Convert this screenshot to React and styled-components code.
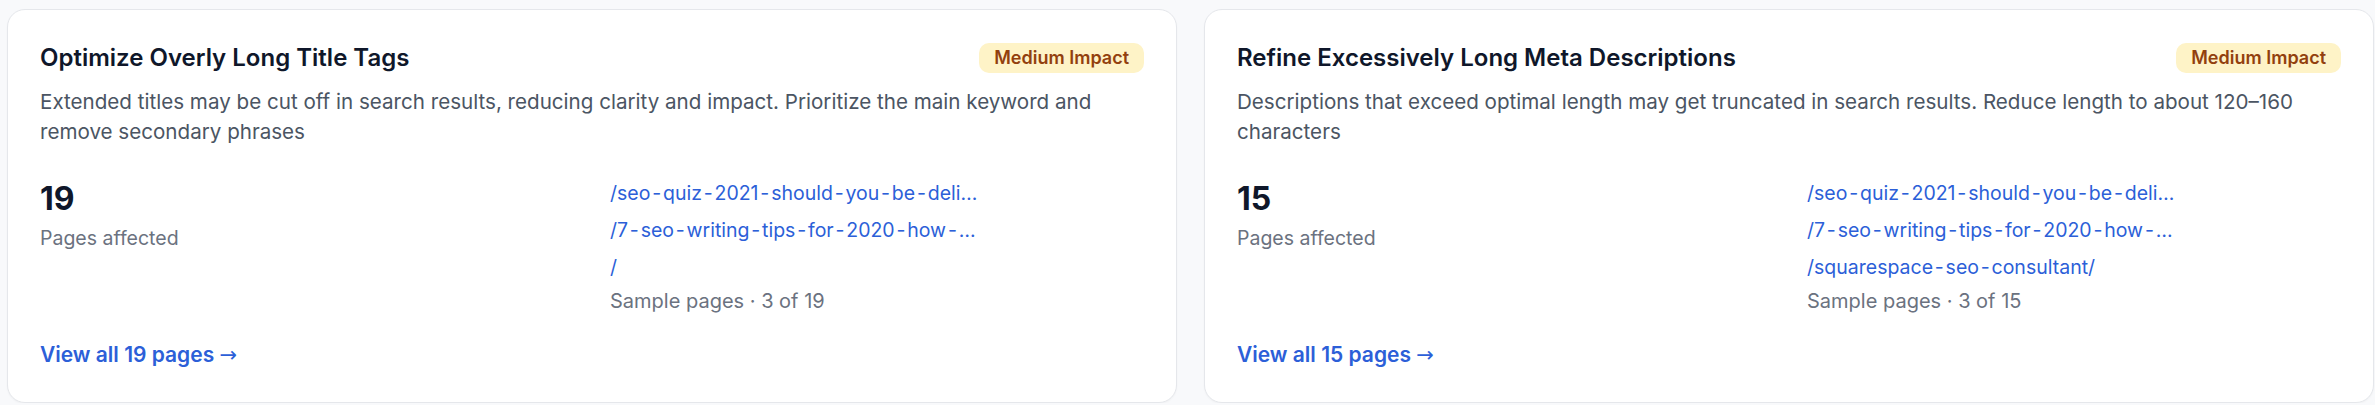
import React from 'react';
import styled, { createGlobalStyle } from 'styled-components';

const GlobalStyle = createGlobalStyle`
    * { box-sizing: border-box; }
    body {
        margin: 0;
        background: #f8f9fb;
        font-family: Inter, "Noto Sans", sans-serif;
        -webkit-font-smoothing: antialiased;
    }
`

const Page = styled.div`
    display: grid;
    grid-template-columns: 1fr 1fr;
    gap: 27px;
    padding: 9px 1px 0 7px;
`

const Card = styled.section`
    display: flex;
    flex-direction: column;
    background: #ffffff;
    border: 1px solid #e5e7eb;
    border-radius: 18px;
    padding: 32px;
    box-shadow: 0 1px 2px rgba(15, 23, 42, 0.03);
`

const Header = styled.div`
    display: flex;
    align-items: center;
    justify-content: space-between;
    gap: 16px;
`

const Title = styled.h3`
    margin: 0;
    font-size: 24px;
    line-height: 32px;
    font-weight: 600;
    color: #0f172a;
`

const Badge = styled.span`
    flex-shrink: 0;
    padding: 3px 15px;
    border-radius: 10px;
    font-size: 18px;
    line-height: 24px;
    font-weight: 600;
    white-space: nowrap;
    background: ${props => props.$bg};
    color: ${props => props.$fg};
`

const Description = styled.p`
    margin: 13px 0 0;
    font-size: 20.6px;
    line-height: 30px;
    color: #4b5563;
`

const Stats = styled.div`
    display: grid;
    grid-template-columns: 1fr 1fr;
    column-gap: 36px;
    margin-top: 33px;
`

const Count = styled.div`
    font-size: 32px;
    line-height: 38px;
    font-weight: 700;
    color: #0f172a;
`

const CountLabel = styled.div`
    margin-top: 6px;
    font-size: 19.5px;
    line-height: 28px;
    color: #6b7280;
`

const SampleColumn = styled.div`
    display: flex;
    flex-direction: column;
`

const SampleList = styled.div`
    display: flex;
    flex-direction: column;
    gap: 10px;
`

const SampleLink = styled.a`
    display: block;
    max-width: 380px;
    font-size: 19.5px;
    line-height: 27px;
    color: #2c5fd8;
    text-decoration: none;
    white-space: nowrap;
    overflow: hidden;
    text-overflow: ellipsis;
`

const Dash = styled.span`
    margin: 0 1.8px;
`

const SampleNote = styled.div`
    margin-top: 6px;
    font-size: 20px;
    line-height: 28px;
    color: #6b7280;
`

const ViewAll = styled.a`
    margin-top: 25px;
    font-size: 21px;
    line-height: 30px;
    font-weight: 600;
    color: #2c5fd8;
    text-decoration: none;
`

const Arrow = styled.span`
    font-family: "DejaVu Sans", "Liberation Sans", sans-serif;
    font-weight: 400;
`

const impactColors = {
    Medium: { bg: '#fef3c7', fg: '#92400e' },
    High: { bg: '#fee2e2', fg: '#991b1b' },
    Low: { bg: '#dcfce7', fg: '#166534' },
}

const issues = [
    {
        title: 'Optimize Overly Long Title Tags',
        impact: 'Medium',
        description: 'Extended titles may be cut off in search results, reducing clarity and impact. Prioritize the main keyword and remove secondary phrases',
        count: 19,
        samples: ['/seo-quiz-2021-should-you-be-deli…', '/7-seo-writing-tips-for-2020-how-…', '/'],
    },
    {
        title: 'Refine Excessively Long Meta Descriptions',
        impact: 'Medium',
        description: 'Descriptions that exceed optimal length may get truncated in search results. Reduce length to about 120–160 characters',
        count: 15,
        samples: ['/seo-quiz-2021-should-you-be-deli…', '/7-seo-writing-tips-for-2020-how-…', '/squarespace-seo-consultant/'],
    },
]

// slugs are shown with roomy hyphens, like in the audit tool
function renderSlug(slug) {
    const parts = slug.split('-');
    return parts.map((part, i) => (
        <React.Fragment key={i}>
            {i > 0 ? <Dash>-</Dash> : null}
            {part}
        </React.Fragment>
    ));
}

function IssueCard({ issue }) {
    const colors = impactColors[issue.impact];
    return (
        <Card>
            <Header>
                <Title>{issue.title}</Title>
                <Badge $bg={colors.bg} $fg={colors.fg}>{issue.impact} Impact</Badge>
            </Header>
            <Description>{issue.description}</Description>
            <Stats>
                <div>
                    <Count>{issue.count}</Count>
                    <CountLabel>Pages affected</CountLabel>
                </div>
                <SampleColumn>
                    <SampleList>
                        {issue.samples.map(slug => (
                            <SampleLink key={slug} href="#">{renderSlug(slug)}</SampleLink>
                        ))}
                    </SampleList>
                    <SampleNote>Sample pages · {issue.samples.length} of {issue.count}</SampleNote>
                </SampleColumn>
            </Stats>
            <ViewAll href="#">View all {issue.count} pages <Arrow>→</Arrow></ViewAll>
        </Card>
    );
}

export default function App() {
    return (
        <>
            <GlobalStyle />
            <Page>
                {issues.map(issue => <IssueCard key={issue.title} issue={issue} />)}
            </Page>
        </>
    );
}
